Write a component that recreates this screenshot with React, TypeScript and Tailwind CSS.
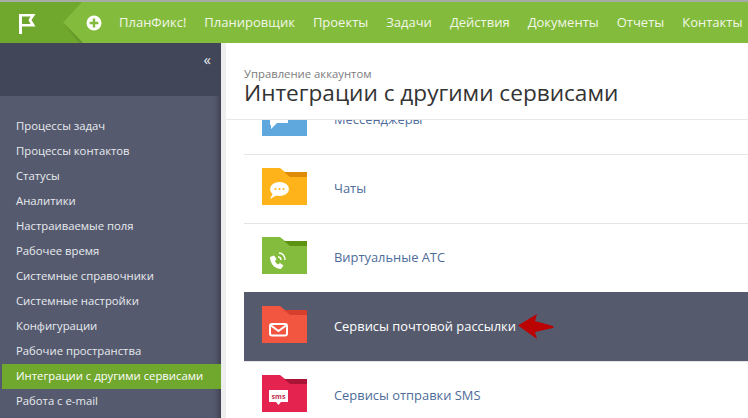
const NAV = ["ПланФикс!", "Планировщик", "Проекты", "Задачи", "Действия", "Документы", "Отчеты", "Контакты"];
const SIDE = ["Процессы задач", "Процессы контактов", "Статусы", "Аналитики", "Настраиваемые поля", "Рабочее время", "Системные справочники", "Системные настройки", "Конфигурации", "Рабочие пространства", "Интеграции с другими сервисами", "Работа с e-mail"];

function Folder({ body, strip, children }: { body: string; strip: string; children: React.ReactNode }) {
  return (
    <svg width="45" height="37" viewBox="0 0 45 37" className="shrink-0 mb-[5px]">
      <path d="M0 0H18L23 4H45V37H0Z" fill={body} />
      <path d="M22 4H45V9H28Z" fill={strip} />
      {children}
    </svg>
  );
}

function Row({ label, icon, active, arrow }: { label: string; icon: React.ReactNode; active?: boolean; arrow?: boolean }) {
  return (
    <div className={active ? "h-[69px] shrink-0 flex items-center pl-[18px] bg-[#555a6c] border-t border-[#555a6c]" : "h-[69px] shrink-0 flex items-center pl-[18px] border-t border-[#e4e4e4]"}>
      {icon}
      <span className={active ? "ml-[27px] text-[12.9px] text-white" : "ml-[27px] text-[12.9px] text-[#4d6c99]"}>{label}</span>
      {arrow && (
        <svg width="37" height="26" viewBox="0 0 37 26" className="ml-[2px]">
          <path d="M0 11.500L19 0L17 7L35 12Q36.500 13 35 14L17 18L19 25Z" fill="#bb0303" />
        </svg>
      )}
    </div>
  );
}

export default function App() {
  return (
    <div className="w-[748px] h-[418px] overflow-hidden flex flex-col bg-white" style={{ fontFamily: '"Open Sans", "Noto Sans", sans-serif' }}>
      <div className="h-[2px] bg-[#a9aca4] shrink-0" />
      <header className="h-[41px] shrink-0 flex items-stretch bg-[#83bc3c]">
        <div className="w-[63px] shrink-0 bg-[#70a72d] flex items-start pl-[19px] pt-[12px]">
          <svg width="17" height="20" viewBox="0 0 17 20">
            <path fillRule="evenodd" d="M0 0H16.500L12.500 6L16.500 12.500H3V20H0ZM3 2.500V10H11.500L9.500 6L11.500 2.500Z" fill="#fff" />
          </svg>
        </div>
        <svg width="20" height="41" viewBox="0 0 20 41" className="shrink-0">
          <rect width="20" height="41" fill="#70a72d" />
          <path d="M0 20.500L19 0H20V41Z" fill="#83bc3c" />
          <path d="M0 20.500L20 41H16Z" fill="#65992a" />
        </svg>
        <svg width="16" height="16" viewBox="0 0 16 16" className="self-center ml-[3px] shrink-0">
          <circle cx="8" cy="8" r="7.500" fill="#fff" />
          <path d="M8 3.600V12.400M3.600 8H12.400" stroke="#83bc3c" strokeWidth="2.400" />
        </svg>
        <nav className="flex items-center gap-[18px] ml-[17px] text-[13px] font-medium text-[#f2f7e7] whitespace-nowrap">
          {NAV.map((n) => <span key={n}>{n}</span>)}
        </nav>
      </header>
      <div className="flex-1 flex min-h-0">
        <aside className="w-[221px] shrink-0 flex flex-col bg-[#555a6e] shadow-[inset_-7px_0_6px_-5px_rgba(0,0,0,0.35)]">
          <div className="h-[53px] shrink-0 bg-[#414759] flex justify-end pr-[10px] pt-[6px]">
            <span className="text-[15px] leading-[20px] text-[#e6e8ee]">«</span>
          </div>
          <ul className="pl-[2px] pt-[18px] flex flex-col text-[11.3px] text-[#e8eaef]">
            {SIDE.map((s, i) => (
              <li key={s} className={i === 10 ? "h-[25px] flex items-center pl-[14px] bg-[#70a72d] text-white font-medium" : "h-[25px] flex items-center pl-[14px]"}>{s}</li>
            ))}
          </ul>
        </aside>
        <div className="w-[5px] shrink-0 bg-[#eeeeee]" />
        <main className="flex-1 flex flex-col min-w-0">
          <div className="h-[77px] shrink-0 border-b border-[#e8e8e8] pl-[18px] pt-[24px] relative z-10 bg-white">
            <div className="text-[11.300px] leading-[13px] text-[#7b7b7b]">Управление аккаунтом</div>
            <h1 className="text-[22.600px] leading-[26px] text-[#333]">Интеграции с другими сервисами</h1>
          </div>
          <div className="flex-1 min-h-0 overflow-hidden pl-[18px]">
            <div className="-mt-[35px] flex flex-col">
              <Row label="Мессенджеры" icon={
                <Folder body="#5fa8dd" strip="#3f85bb">
                  <path d="M8 17H26V24H15L9 30V26H8Z" fill="#fff" />
                </Folder>} />
              <Row label="Чаты" icon={
                <Folder body="#ffb31a" strip="#e08a0a">
                  <ellipse cx="17.500" cy="21" rx="9.500" ry="7" fill="#fff" />
                  <path d="M8 31L11 25L15 27Z" fill="#fff" />
                  <circle cx="13.500" cy="21" r="1.100" fill="#ffb31a" />
                  <circle cx="17.500" cy="21" r="1.100" fill="#ffb31a" />
                  <circle cx="21.500" cy="21" r="1.100" fill="#ffb31a" />
                </Folder>} />
              <Row label="Виртуальные АТС" icon={
                <Folder body="#84bd3d" strip="#5c9412">
                  <path d="M8 20C8 27 13 32 19 32L21.500 28.500L18 26L16 27.500C14.500 26.500 13.500 25.500 13 24L14.500 22L12 18.500Z" fill="#fff" />
                  <path d="M16 20C18 20 19 21 19 23M17 16C20.500 16 23 19 23 23" fill="none" stroke="#fff" strokeWidth="1.400" />
                </Folder>} />
              <Row active arrow label="Сервисы почтовой рассылки" icon={
                <Folder body="#f25540" strip="#d63f2c">
                  <rect x="8" y="18" width="17" height="11.500" rx="2" fill="none" stroke="#fff" strokeWidth="2" />
                  <path d="M9 19.500L16.500 25L24 19.500" fill="none" stroke="#fff" strokeWidth="2" />
                </Folder>} />
              <Row label="Сервисы отправки SMS" icon={
                <Folder body="#e5234f" strip="#aa1536">
                  <path d="M7 15H26V27H19L16.500 30L14 27H7Z" fill="#fff" />
                  <text x="16.500" y="24" textAnchor="middle" fontSize="7" fontWeight="700" fill="#c0304f" fontFamily="Open Sans">sms</text>
                </Folder>} />
            </div>
          </div>
        </main>
      </div>
    </div>
  );
}
